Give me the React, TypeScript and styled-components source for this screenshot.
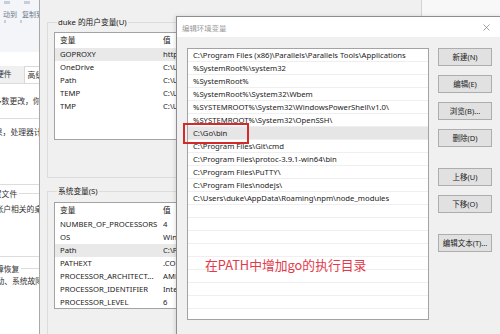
import React from 'react'
import styled, { createGlobalStyle } from 'styled-components'

const GlobalStyle = createGlobalStyle`
  html, body {
    margin: 0;
    padding: 0;
    background: #f0f0f0;
  }
  * {
    box-sizing: border-box;
  }
`

const uiFont = `"Noto Sans", "Noto Sans CJK SC", sans-serif`

const Screen = styled.div`
  position: relative;
  width: 500px;
  height: 334px;
  overflow: hidden;
  background: #f0f0f0;
  font-family: ${uiFont};
  font-size: 7.7px;
  color: #1a1a1a;
`

/* ---------- system properties window (far left, mostly hidden) ---------- */

const SysWindow = styled.div`
  position: absolute;
  left: 0;
  top: 0;
  width: 40px;
  height: 334px;
  background: #fff;
  overflow: hidden;
  display: flex;
  flex-direction: column;
  font-size: 7.8px;
  color: #333;
`

const Ribbon = styled.div`
  height: 52px;
  flex-shrink: 0;
  background: #f3f5f8;
  display: flex;
  flex-direction: column;
  padding-top: 1px;
`

const RibbonMarks = styled.div<{ $h: number; $w: number }>`
  display: flex;
  gap: 14px;
  padding-left: 4px;
  height: ${(p) => p.$h}px;

  span {
    width: ${(p) => p.$w}px;
    height: 3px;
    background: #c5ceda;
  }
`

const RibbonText = styled.div`
  display: flex;
  gap: 5px;
  padding-left: 3px;
  margin-top: 5px;
  height: 10px;
  line-height: 10px;
  font-size: 7px;
  color: #6b7a8c;
  white-space: nowrap;
`

const TabRow = styled.div`
  display: flex;
  flex-shrink: 0;
  margin-top: 14px;
  height: 18px;
  background: #f0f0f0;
  border-bottom: 1px solid #dadada;
  white-space: nowrap;
`

const Tab = styled.div<{ $active?: boolean; $shift: number }>`
  line-height: 17px;
  margin-left: ${(p) => p.$shift}px;
  padding: 0 3px;
  background: ${(p) => (p.$active ? '#fff' : 'transparent')};
  border: ${(p) => (p.$active ? '1px solid #d9d9d9' : 'none')};
  border-bottom: none;
`

const SysLine = styled.div<{ $shift: number; $gap: number }>`
  flex-shrink: 0;
  margin-top: ${(p) => p.$gap}px;
  margin-left: ${(p) => p.$shift}px;
  height: 12px;
  line-height: 12px;
  white-space: nowrap;
`

const SysRule = styled.div<{ $gap: number }>`
  margin-top: ${(p) => p.$gap}px;
  height: 1px;
  flex-shrink: 0;
  background: #dcdcdc;
`

const SysGroupLabel = styled.div<{ $shift: number; $gap: number }>`
  display: flex;
  flex-shrink: 0;
  align-items: center;
  margin-top: ${(p) => p.$gap}px;
  margin-left: ${(p) => p.$shift}px;
  height: 12px;
  white-space: nowrap;

  &::after {
    content: '';
    flex: 1;
    min-width: 40px;
    height: 1px;
    margin-left: 2px;
    background: #dcdcdc;
  }
`

/* ---------- environment variables window ---------- */

const EnvWindow = styled.div`
  position: absolute;
  left: 39px;
  top: 0;
  width: 480px;
  height: 334px;
  background: #f0f0f0;
  border-left: 1px solid #a9a9a9;
  display: flex;
  flex-direction: column;
  padding-left: 7px;
`

const CornerPane = styled.div`
  position: absolute;
  left: 381px;
  top: 0;
  width: 100px;
  height: 16px;
  background: #f8f8f8;
  border-left: 1px solid #d3d3d3;
`

const Group = styled.fieldset<{ $top: number; $height: number; $pad: number }>`
  flex-shrink: 0;
  margin: ${(p) => p.$top}px 0 0;
  padding: ${(p) => p.$pad}px 0 0 6px;
  width: 420px;
  height: ${(p) => p.$height}px;
  border: 1px solid #dcdcdc;
  min-width: 0;

  legend {
    padding: 0 1px;
    margin-left: 3px;
    line-height: 10px;
    font-size: 7.7px;
    color: #1a1a1a;
  }
`

const VarList = styled.div<{ $height: number }>`
  width: 360px;
  height: ${(p) => p.$height}px;
  background: #fff;
  border: 1px solid #a3a3a3;
`

const VarRow = styled.div<{ $header?: boolean; $selected?: boolean }>`
  display: grid;
  grid-template-columns: 103px 1fr;
  padding-left: 5px;
  height: ${(p) => (p.$header ? 15 : 13)}px;
  line-height: ${(p) => (p.$header ? 15 : 13)}px;
  white-space: nowrap;
  background: ${(p) => (p.$selected ? '#e9e9e9' : 'transparent')};
  color: #222;

  span {
    overflow: hidden;
  }
`

/* ---------- edit environment variable dialog ---------- */

const EditWindow = styled.div`
  position: absolute;
  left: 176px;
  top: 16px;
  width: 326px;
  height: 330px;
  background: #f0f0f0;
  border: 1px solid #8e8e8e;
  box-shadow: -1px 0 4px rgba(0, 0, 0, 0.12);
  display: flex;
  flex-direction: column;
`

const TitleBar = styled.div`
  height: 20px;
  flex-shrink: 0;
  background: #fff;
  display: flex;
  align-items: center;
  justify-content: space-between;
  padding: 0 11px 0 5px;
  font-size: 7.4px;
  color: #9a9a9a;
`

const EditBody = styled.div`
  position: relative;
  display: flex;
  padding: 11px 0 0 10px;
  gap: 9px;
`

const PathList = styled.div`
  width: 242px;
  height: 272px;
  background: #fff;
  border: 1px solid #a3a3a3;
  overflow: hidden;
`

const PathRow = styled.div<{ $selected?: boolean }>`
  height: 13px;
  line-height: 12px;
  padding-left: 5px;
  border-bottom: 1px solid #efefef;
  white-space: nowrap;
  background: ${(p) => (p.$selected ? '#e6e6e6' : '#fff')};
  color: #222;
`

const ButtonColumn = styled.div`
  display: flex;
  flex-direction: column;
  gap: 9px;
  width: 54px;
`

const DialogButton = styled.button<{ $extra?: number }>`
  margin-top: ${(p) => p.$extra || 0}px;
  height: 18px;
  width: 54px;
  padding: 0;
  background: #e1e1e1;
  border: 1px solid #adadad;
  font-family: ${uiFont};
  font-size: 7.5px;
  line-height: 16px;
  color: #222;
`

const Highlight = styled.div`
  position: absolute;
  left: 6px;
  top: 86px;
  width: 66px;
  height: 21px;
  border: 2px solid #d42a2a;
`

const Note = styled.div`
  position: absolute;
  left: 28px;
  top: 220px;
  font-family: "Noto Sans CJK SC", sans-serif;
  font-size: 12.8px;
  line-height: 16px;
  color: #e23a4c;
  white-space: nowrap;
`

const userVars = [
  ['GOPROXY', 'https://goproxy.cn,direct'],
  ['OneDrive', 'C:\\Users\\duke\\OneDrive'],
  ['Path', 'C:\\Users\\duke\\AppData\\Local\\Microsoft\\WindowsApps;'],
  ['TEMP', 'C:\\Users\\duke\\AppData\\Local\\Temp'],
  ['TMP', 'C:\\Users\\duke\\AppData\\Local\\Temp'],
]

const systemVars = [
  ['NUMBER_OF_PROCESSORS', '4'],
  ['OS', 'Windows_NT'],
  ['Path', 'C:\\Program Files (x86)\\Parallels\\Parallels Tools\\Applications'],
  ['PATHEXT', '.COM;.EXE;.BAT;.CMD;.VBS;.VBE;.JS;.JSE'],
  ['PROCESSOR_ARCHITECT...', 'AMD64'],
  ['PROCESSOR_IDENTIFIER', 'Intel64 Family 6 Model 142 Stepping 10'],
  ['PROCESSOR_LEVEL', '6'],
]

const pathEntries = [
  'C:\\Program Files (x86)\\Parallels\\Parallels Tools\\Applications',
  '%SystemRoot%\\system32',
  '%SystemRoot%',
  '%SystemRoot%\\System32\\Wbem',
  '%SYSTEMROOT%\\System32\\WindowsPowerShell\\v1.0\\',
  '%SYSTEMROOT%\\System32\\OpenSSH\\',
  'C:\\Go\\bin',
  'C:\\Program Files\\Git\\cmd',
  'C:\\Program Files\\protoc-3.9.1-win64\\bin',
  'C:\\Program Files\\PuTTY\\',
  'C:\\Program Files\\nodejs\\',
  'C:\\Users\\duke\\AppData\\Roaming\\npm\\node_modules',
]

const buttons: [string, number][] = [
  ['新建(N)', 0],
  ['编辑(E)', 0],
  ['浏览(B)...', 0],
  ['删除(D)', 0],
  ['上移(U)', 12],
  ['下移(O)', 0],
  ['编辑文本(T)...', 12],
]

const CloseIcon = () => (
  <svg width='7' height='7' viewBox='0 0 7 7'>
    <path d='M0.5 0.5 L6.5 6.5 M6.5 0.5 L0.5 6.5' stroke='#8a8a8a' strokeWidth='0.8' fill='none' />
  </svg>
)

const App: React.FC = () => {
  const rows = [...pathEntries, ...Array(9).fill('')]

  return (
    <Screen>
      <GlobalStyle />

      {/* 系统属性 (被遮挡) */}
      <SysWindow>
        <Ribbon>
          <RibbonMarks $h={4} $w={6}>
            <span />
            <span />
          </RibbonMarks>
          <RibbonText>
            <span>动到</span>
            <span>复制到</span>
          </RibbonText>
          <RibbonMarks $h={3} $w={2}>
            <span />
            <span />
          </RibbonMarks>
        </Ribbon>
        <TabRow>
          <Tab $shift={-7}>硬件</Tab>
          <Tab $shift={9} $active>高级</Tab>
        </TabRow>
        <SysLine $gap={11} $shift={-14}>大多数更改，你必须作为管理员登录。</SysLine>
        <SysRule $gap={11} />
        <SysLine $gap={7} $shift={-13}>效果，处理器计划，内存使用，以及虚拟内存</SysLine>
        <SysRule $gap={46} />
        <SysGroupLabel $gap={2} $shift={-14}>配置文件</SysGroupLabel>
        <SysLine $gap={4} $shift={-28}>与登录帐户相关的桌面设置</SysLine>
        <SysRule $gap={41} />
        <SysGroupLabel $gap={5} $shift={-4}>障恢复</SysGroupLabel>
        <SysLine $gap={1} $shift={-27}>系统启动、系统故障和调试信息</SysLine>
      </SysWindow>

      {/* 环境变量 */}
      <EnvWindow>
        <CornerPane />
        <Group $top={17} $height={161} $pad={5}>
          <legend>duke 的用户变量(U)</legend>
          <VarList $height={108}>
            <VarRow $header>
              <span>变量</span>
              <span>值</span>
            </VarRow>
            {userVars.map(([name, value], i) => (
              <VarRow key={name} $selected={i === 0}>
                <span>{name}</span>
                <span>{value}</span>
              </VarRow>
            ))}
          </VarList>
        </Group>
        <Group $top={8} $height={200} $pad={6}>
          <legend>系统变量(S)</legend>
          <VarList $height={107}>
            <VarRow $header>
              <span>变量</span>
              <span>值</span>
            </VarRow>
            {systemVars.map(([name, value]) => (
              <VarRow key={name} $selected={name === 'Path'}>
                <span>{name}</span>
                <span>{value}</span>
              </VarRow>
            ))}
          </VarList>
        </Group>
      </EnvWindow>

      {/* 编辑环境变量 */}
      <EditWindow>
        <TitleBar>
          <span>编辑环境变量</span>
          <CloseIcon />
        </TitleBar>
        <EditBody>
          <PathList>
            {rows.map((entry, i) => (
              <PathRow key={i} $selected={entry === 'C:\\Go\\bin'}>
                {entry}
              </PathRow>
            ))}
          </PathList>
          <ButtonColumn>
            {buttons.map(([label, extra]) => (
              <DialogButton key={label} $extra={extra}>
                {label}
              </DialogButton>
            ))}
          </ButtonColumn>
          <Highlight />
          <Note>在PATH中增加go的执行目录</Note>
        </EditBody>
      </EditWindow>
    </Screen>
  )
}

export default App
